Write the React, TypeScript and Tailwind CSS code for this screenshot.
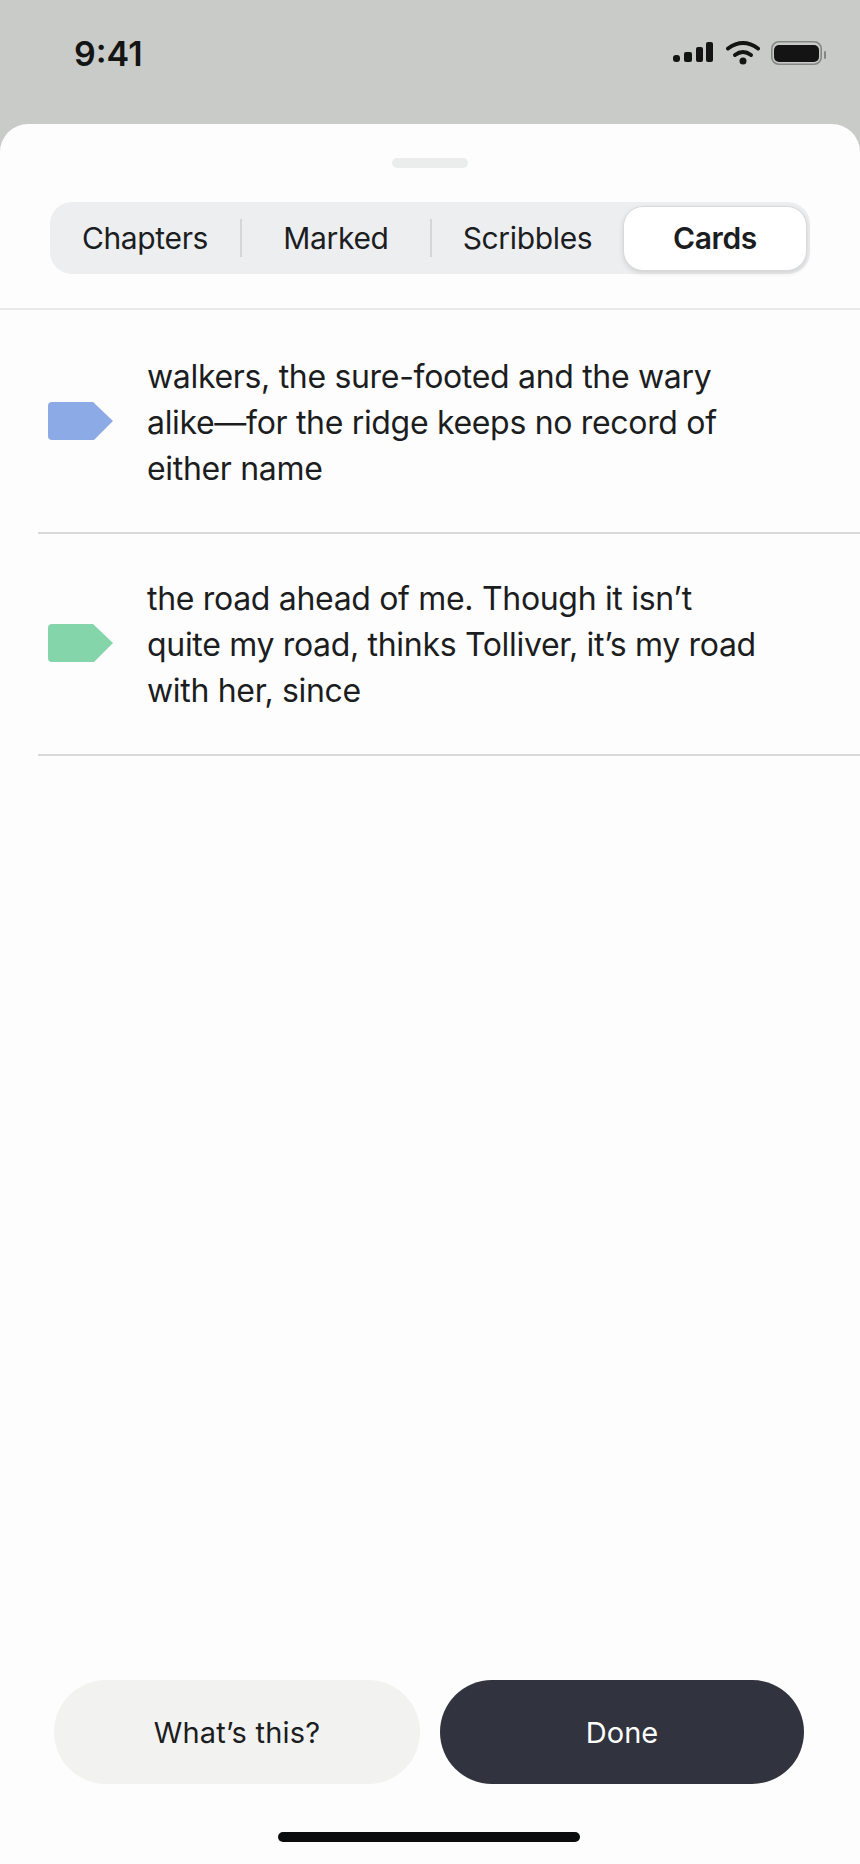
const tabs = ["Chapters", "Marked", "Scribbles"];

const cards = [
  {
    color: "#8cabe6",
    lines: ["walkers, the sure-footed and the wary", "alike—for the ridge keeps no record of", "either name"],
  },
  {
    color: "#85d5ab",
    lines: ["the road ahead of me. Though it isn’t", "quite my road, thinks Tolliver, it’s my road", "with her, since"],
  },
];

function StatusIcons() {
  return (
    <svg width="153" height="26" viewBox="0 0 153 26" fill="none">
      <rect x="0" y="15" width="7" height="7" rx="3" fill="#131413" />
      <rect x="11" y="12" width="8" height="10" rx="2" fill="#131413" />
      <rect x="23" y="7" width="7" height="15" rx="2" fill="#131413" />
      <rect x="33" y="2" width="7" height="20" rx="2" fill="#131413" />
      <path d="M55 8.5Q70 -2.5 85 8.5" stroke="#131413" strokeWidth="4" strokeLinecap="round" />
      <path d="M62 15Q70 9 78 15" stroke="#131413" strokeWidth="4" strokeLinecap="round" />
      <circle cx="70" cy="21" r="3.5" fill="#131413" />
      <rect x="98.8" y="1.8" width="49.4" height="22.4" rx="7" stroke="#858785" strokeWidth="1.6" />
      <rect x="101" y="5" width="45" height="17" rx="5" fill="#131413" />
      <rect x="151" y="11" width="2" height="8" rx="1" fill="#858785" />
    </svg>
  );
}

function Tag({ color }: { color: string }) {
  return (
    <svg width="65" height="38" viewBox="0 0 65 38" className="mb-[2px] shrink-0">
      <path d="M4 0H45L65 19L46 38H4a4 4 0 0 1-4-4V4a4 4 0 0 1 4-4Z" fill={color} />
    </svg>
  );
}

export default function App() {
  return (
    <main className="flex h-[1864px] w-[860px] flex-col overflow-hidden bg-[#c9cbc8] font-['Inter',sans-serif] text-[#1c1d1f]">
      <header className="flex h-[124px] shrink-0 items-start justify-between pl-[74px] pr-[34px] pt-[34px]">
        <span className="text-[34px] font-semibold leading-[40px] text-[#131413]">9:41</span>
        <div className="pt-[6px]">
          <StatusIcons />
        </div>
      </header>

      <section className="flex flex-1 flex-col rounded-t-[28px] bg-[#fdfdfd]">
        <div className="mx-auto mt-[34px] h-[10px] w-[76px] rounded-full bg-[#ebecec]" />

        <div className="mx-[50px] mt-[34px] flex h-[72px] items-center rounded-[22px] bg-[#edeef0] text-[30px] tracking-[-0.35px]">
          {tabs.map((tab, i) => (
            <div key={tab} className={`flex h-[38px] items-center justify-center pt-[1px] ${i === 0 ? "w-[192px]" : i === 1 ? "w-[190px]" : "w-[191px]"} ${i < 2 ? "border-r-2 border-[#d5d6d8]" : ""}`}>
              {tab}
            </div>
          ))}
          <div className="flex h-[65px] w-[184px] items-center justify-center rounded-[20px] border border-[#d9d9d9] bg-white pt-[1px] font-semibold shadow-[0_2px_5px_rgba(0,0,0,0.12)]">
            Cards
          </div>
        </div>

        <div className="mt-[34px] border-b-2 border-[#e9e9e9]" />

        <div className="mt-[2px]">
          {cards.map((card) => (
            <div key={card.lines[0]} className="ml-[38px] flex h-[222px] items-center gap-[34px] border-b-2 border-[#d9d9d9] pl-[10px] text-[32px] leading-[46px] tracking-[-0.32px]">
              <Tag color={card.color} />
              <p className="whitespace-nowrap pt-[1px]">
                {card.lines.map((line) => (
                  <span key={line} className="block">
                    {line}
                  </span>
                ))}
              </p>
            </div>
          ))}
        </div>

        <div className="mt-auto flex gap-[20px] pl-[54px] pr-[56px] text-[29px]">
          <button className="h-[104px] w-[366px] rounded-full bg-[#f2f2f0] pt-[2px] tracking-[0.2px]">What’s this?</button>
          <button className="h-[104px] w-[364px] rounded-full bg-[#31333e] pt-[2px] text-white">Done</button>
        </div>

        <div className="mb-[22px] ml-[278px] mt-[48px] h-[10px] w-[302px] rounded-full bg-[#0b0c0d]" />
      </section>
    </main>
  );
}
